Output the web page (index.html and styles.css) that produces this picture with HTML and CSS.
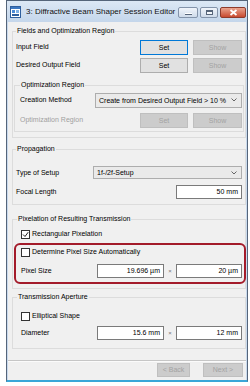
FILE: index.html
```html
<!DOCTYPE html>
<html>
<head>
	<meta charset="UTF-8">
	<title>Diffractive Beam Shaper Session Editor</title>
	<link rel="stylesheet" href="styles.css">
</head>
<body>
<div class="window">
	<div class="titlebar">
		<svg class="app-icon" width="11" height="12" viewBox="0 0 11 12">
			<rect x="0.5" y="0.5" width="10" height="11" fill="#fff" stroke="#2f5f9e"/>
			<rect x="1" y="1" width="9" height="2" fill="#3d78c2"/>
			<rect x="2" y="4" width="3" height="3" fill="#4a8ad6"/>
			<rect x="6" y="4" width="3" height="3" fill="#7fb1e6"/>
			<rect x="2" y="8" width="7" height="2" fill="#2f5f9e"/>
		</svg>
		<span class="title">3: Diffractive Beam Shaper Session Editor</span>
		<div class="caption">
			<span class="cap cap-min"><i></i></span>
			<span class="cap cap-max"><i></i></span>
			<span class="cap cap-close">
				<svg width="9" height="7" viewBox="0 0 9 7"><path d="M1.5 1 L7.5 6 M7.5 1 L1.5 6" stroke="#fff" stroke-width="1.8"/></svg>
			</span>
		</div>
	</div>

	<div class="client">
		<fieldset class="group g-fields">
			<legend>Fields and Optimization Region</legend>
			<div class="row">
				<span class="label">Input Field</span>
				<button class="btn btn-set focus">Set</button>
				<button class="btn btn-show" disabled>Show</button>
			</div>
			<div class="row">
				<span class="label">Desired Output Field</span>
				<button class="btn btn-set">Set</button>
				<button class="btn btn-show" disabled>Show</button>
			</div>

			<fieldset class="group g-sub">
				<legend>Optimization Region</legend>
				<div class="row row-20">
					<span class="label">Creation Method</span>
					<div class="combo combo-method">Create from Desired Output Field &gt; 10 %<svg class="chev" width="6" height="4" viewBox="0 0 6 4"><path d="M0.5 0.5 L3 3 L5.5 0.5" fill="none" stroke="#666"/></svg></div>
				</div>
				<div class="row row-20">
					<span class="label disabled">Optimization Region</span>
					<button class="btn btn-set" disabled>Set</button>
					<button class="btn btn-show" disabled>Show</button>
				</div>
			</fieldset>
		</fieldset>

		<fieldset class="group g-prop">
			<legend>Propagation</legend>
			<div class="row row-19">
				<span class="label">Type of Setup</span>
				<div class="combo combo-setup">1f-/2f-Setup<svg class="chev" width="6" height="4" viewBox="0 0 6 4"><path d="M0.5 0.5 L3 3 L5.5 0.5" fill="none" stroke="#666"/></svg></div>
			</div>
			<div class="row row-19">
				<span class="label">Focal Length</span>
				<div class="field">50 mm</div>
			</div>
		</fieldset>

		<fieldset class="group g-pix">
			<legend>Pixelation of Resulting Transmission</legend>
			<div class="row row-16">
				<span class="check checked"><svg width="7" height="7" viewBox="0 0 7 7"><path d="M1 3.5 L3 5.5 L6.2 1.2" fill="none" stroke="#222" stroke-width="1"/></svg></span>
				<span class="label">Rectangular Pixelation</span>
			</div>
			<div class="highlight">
				<div class="row row-14">
					<span class="check"></span>
					<span class="label">Determine Pixel Size Automatically</span>
				</div>
				<div class="row row-18 pair">
					<span class="label">Pixel Size</span>
					<div class="field field-pair">19.696 µm</div>
					<span class="times">×</span>
					<div class="field">20 µm</div>
				</div>
			</div>
		</fieldset>

		<fieldset class="group g-aperture">
			<legend>Transmission Aperture</legend>
			<div class="row row-16">
				<span class="check"></span>
				<span class="label">Elliptical Shape</span>
			</div>
			<div class="row row-18 pair">
				<span class="label">Diameter</span>
				<div class="field field-pair">15.6 mm</div>
				<span class="times">×</span>
				<div class="field">12 mm</div>
			</div>
		</fieldset>

		<div class="separator"></div>
		<div class="nav">
			<button class="btn btn-back" disabled>&lt; Back</button>
			<button class="btn btn-next" disabled>Next &gt;</button>
		</div>
	</div>
</div>
</body>
</html>
```

FILE: styles.css
```css
*{margin: 0;padding: 0;box-sizing: border-box;}
body{background: #fff;font-family: "Liberation Sans", Arial, sans-serif;font-size: 7px;color: #000;}

.window{width: 242px;height: 382px;margin-left: 6px;border: 1px solid #55657a;border-bottom: 2px solid #3aa6d8;background: #c9daee;display: flex;flex-direction: column;}
.titlebar{height: 21px;display: flex;align-items: center;padding: 0 1px 0 3px;background: linear-gradient(#dce8f5, #c4d6eb);}
.app-icon{display: block;margin-top: 1px;}
.title{margin-left: 5px;font-size: 8px;line-height: 10px;color: #111;}
.caption{margin-left: auto;display: flex;gap: 2px;align-self: flex-start;margin-top: 6px;}
.cap{display: flex;align-items: center;justify-content: center;height: 11px;border: 1px solid #8393aa;border-radius: 2px;background: linear-gradient(#f0f4fa, #cfdbea);}
.cap-min{width: 20px;}
.cap-max{width: 18px;}
.cap-close{width: 26px;border-color: #8e3b2c;background: linear-gradient(#eaa48f, #c84a30);}
.cap-min i{display: block;width: 7px;height: 2px;margin-top: 3px;background: #fff;border: 1px solid #56657a;border-width: 0 0 1px;}
.cap-max i{display: block;width: 7px;height: 5px;border: 1px solid #56657a;border-top-width: 2px;background: #f4f7fb;}

.client{flex: 1;margin: 0 1px;background: #f0f0f0;display: flex;flex-direction: column;}

.group{border: 1px solid #dcdcdc;min-width: 0;}
.group legend{padding: 0 1px;line-height: 10px;color: #000;}
.g-fields{margin: 4px 0 0 4px;padding: 2px 3px 0 3px;}
.g-sub{margin: 6px -2px 5px -2px;padding: 0 1px 1px 5px;}
.g-prop{margin: 6px 0 0 4px;padding: 9px 3px 3px 3px;}
.g-pix{margin: 9px 0 0 4px;padding: 2px 3px 4px 8px;}
.g-pix legend, .g-aperture legend{margin-left: -4px;}
.g-aperture{margin: 3px 0 0 4px;padding: 6px 3px 6px 8px;}

.row{display: flex;align-items: center;height: 18px;}
.row-20{height: 20px;}
.row-19{height: 19px;}
.row-16{height: 16px;}
.row-14{height: 14px;}
.label{flex: 1;line-height: 10px;white-space: nowrap;}
.check + .label{margin-left: 2px;}
.label.disabled{color: #a0a0a0;}

.btn{font: inherit;height: 15px;line-height: 13px;text-align: center;border: 1px solid #adadad;background: #e1e1e1;color: #000;}
.btn.focus{border-color: #0078d7;}
.btn:disabled{background: #cccccc;border-color: #bfbfbf;color: #a3a3a3;}
.btn-set{width: 48px;}
.btn-show{width: 49px;margin-left: 5px;}

.combo{position: relative;height: 15px;line-height: 13px;padding-left: 3px;border: 1px solid #adadad;background: #eaeaea;white-space: nowrap;}
.combo-method{width: 147px;}
.combo-setup{width: 149px;height: 13px;line-height: 11px;}
.chev{position: absolute;right: 4px;top: 50%;margin-top: -2px;}

.field{width: 66px;height: 14px;line-height: 12px;padding-right: 3px;text-align: right;border: 1px solid #7a7a7a;background: #fff;}
.pair .label{flex: 0 0 auto;width: 76px;}
.field-pair{width: 67px;}
.times{width: 12px;text-align: center;color: #777;font-size: 6px;}

.check{display: flex;align-items: center;justify-content: center;width: 9px;height: 9px;border: 1px solid #333;background: #fff;flex: 0 0 auto;}

.highlight{margin: 1px -4px 0 -7px;padding: 0 2px 2px 5px;border: 2px solid #a31b2a;border-radius: 6px;}
.highlight .row-18{margin-top: 3px;}

.separator{margin-top: 11px;border-top: 1px solid #c6c6c6;border-bottom: 1px solid #fbfbfb;}
.nav{display: flex;justify-content: flex-end;padding: 1px 3px 0 0;gap: 13px;}
.nav .btn{height: 14px;line-height: 12px;}
.btn-back{width: 33px;}
.btn-next{width: 40px;}
```
